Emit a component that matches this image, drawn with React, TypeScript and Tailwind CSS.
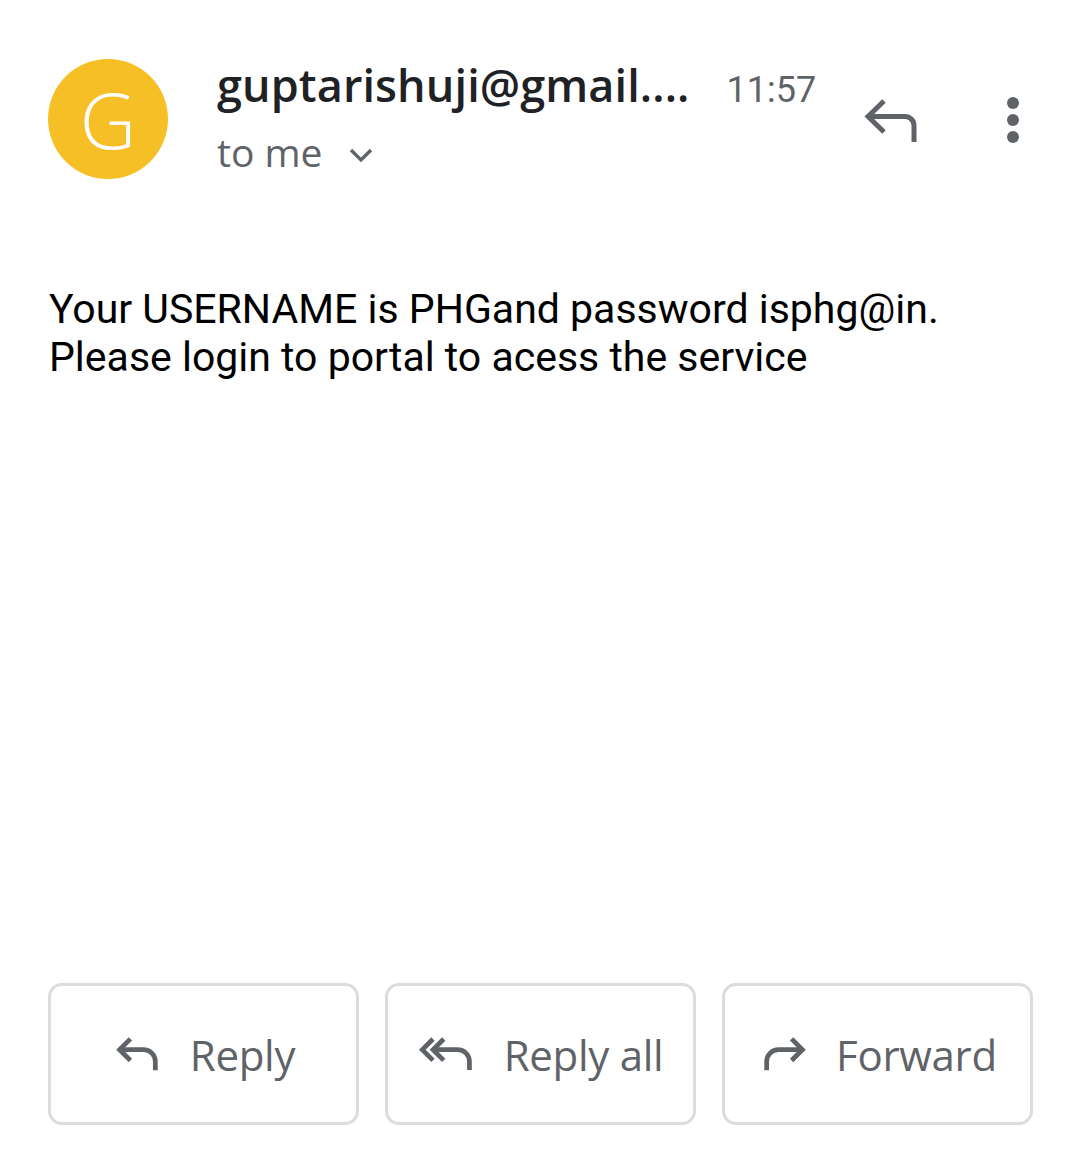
import React from "react";

const TopReply = ({ className = "" }: { className?: string }) => (
  <svg viewBox="0 0 56 44" className={className} fill="none" stroke="currentColor" strokeWidth="5">
    <path d="M21 3 L5 18.5 L21 34" />
    <path d="M5 18.5 H42 A9 9 0 0 1 51 27.5 V44" />
  </svg>
);

const ReplyIcon = ({ className = "" }: { className?: string }) => (
  <svg viewBox="0 0 24 24" className={className} fill="none" stroke="currentColor" strokeWidth="2.2" strokeLinecap="butt" strokeLinejoin="miter">
    <path d="M8.5 5 L3.5 10 L8.5 15" />
    <path d="M3.5 10 H14.5 A5.5 5.5 0 0 1 20 15.5 V19.5" />
  </svg>
);

const ReplyAllIcon = ({ className = "" }: { className?: string }) => (
  <svg viewBox="0 0 28 24" className={className} fill="none" stroke="currentColor" strokeWidth="2.2">
    <path d="M7 5 L2 10 L7 15" />
    <path d="M12 5 L7 10 L12 15" />
    <path d="M7 10 H18.5 A5.5 5.5 0 0 1 24 15.5 V19.5" />
  </svg>
);

const ForwardIcon = ({ className = "" }: { className?: string }) => (
  <svg viewBox="0 0 24 24" className={className} fill="none" stroke="currentColor" strokeWidth="2.2">
    <path d="M15.5 5 L20.5 10 L15.5 15" />
    <path d="M20.5 10 H9.5 A5.5 5.5 0 0 0 4 15.5 V19.5" />
  </svg>
);

export default function App() {
  return (
    <div className="w-[1080px] h-[1174px] bg-white relative" style={{ fontFamily: "Roboto, 'Liberation Sans', sans-serif" }}>
      <div className="flex items-start pt-[59px] pl-[48px] pr-[61px]">
        <div className="w-[120px] h-[120px] rounded-full bg-[#f6bf26] flex items-center justify-center shrink-0">
          <span className="text-white text-[78px] leading-none font-light" style={{ fontFamily: "'Open Sans', sans-serif" }}>G</span>
        </div>
        <div className="ml-[49px] flex flex-col">
          <div className="flex items-baseline">
            <span className="text-[45px] font-semibold text-[#202124] leading-[52px] tracking-[0.1px]" style={{ fontFamily: "'Open Sans', sans-serif" }}>guptarishuji@gmail....</span>
            <span className="ml-[37px] text-[36px] text-[#5f6368]">11:57</span>
          </div>
          <div className="flex items-center mt-[12px] text-[#5f6368]">
            <span className="text-[39px] leading-[46px]" style={{ fontFamily: "'Open Sans', sans-serif" }}>to me</span>
            <svg viewBox="0 0 24 24" className="w-[40px] h-[40px] ml-[18px] mt-[6px]" fill="none" stroke="currentColor" strokeWidth="2">
              <path d="M6 9 L12 15 L18 9" />
            </svg>
          </div>
        </div>
        <div className="ml-auto flex items-center mt-[38px]">
          <TopReply className="w-[56px] h-[44px] text-[#5f6368]" />
          <div className="ml-[88px] flex flex-col gap-[5px] items-center">
            <div className="w-[12px] h-[12px] rounded-full bg-[#5f6368]" />
            <div className="w-[12px] h-[12px] rounded-full bg-[#5f6368]" />
            <div className="w-[12px] h-[12px] rounded-full bg-[#5f6368]" />
          </div>
        </div>
      </div>

      <div className="pl-[49px] mt-[106px] text-[41px] leading-[48px] text-black">
        <div>Your USERNAME is PHGand password isphg@in.</div>
        <div>Please login to portal to acess the service</div>
      </div>

      <div className="absolute left-[48px] top-[983px] flex gap-[26px]">
        {[
          { label: "Reply", icon: <ReplyIcon className="w-[52px] h-[52px]" /> },
          { label: "Reply all", icon: <ReplyAllIcon className="w-[60px] h-[52px]" /> },
          { label: "Forward", icon: <ForwardIcon className="w-[52px] h-[52px]" /> },
        ].map((b) => (
          <div key={b.label} className="w-[311px] h-[142px] border-[3px] border-[#dadce0] rounded-[14px] flex items-center justify-center gap-[26px] text-[#5f6368]">
            {b.icon}
            <span className="text-[42px] font-medium tracking-[-0.3px]" style={{ fontFamily: "'Open Sans', sans-serif" }}>{b.label}</span>
          </div>
        ))}
      </div>
    </div>
  );
}
